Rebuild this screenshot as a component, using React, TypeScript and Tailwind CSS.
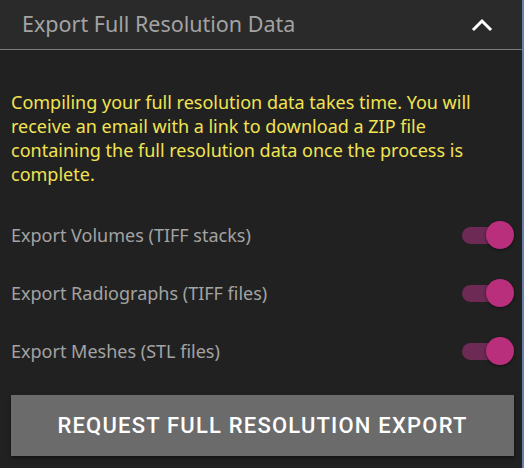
import React from 'react';

const options = [
    'Export Volumes (TIFF stacks)',
    'Export Radiographs (TIFF files)',
    'Export Meshes (STL files)',
];

function Toggle() {
    return (
        <div className="relative flex h-[28px] w-[52px] items-center">
            <div className="h-[17px] w-[38px] rounded-full bg-[#6c2a55]" />
            <div className="absolute right-0 top-0 h-[28px] w-[28px] rounded-full bg-[#b92f7b] shadow-[0_1px_3px_rgba(0,0,0,0.5)]" />
        </div>
    );
}

export default function App() {
    return (
        <main className="flex h-[468px] w-[524px] bg-[#212121] font-['Noto_Sans',sans-serif]">
            <div className="flex flex-1 flex-col">
                <header className="flex h-[50px] items-center justify-between border-b border-[#7a7a7a] bg-[#2a2a2a] pl-[22px] pr-[29px]">
                    <h1 className="text-[21.5px] text-[#a3a3a3]">Export Full Resolution Data</h1>
                    <svg width="22" height="14" viewBox="0 0 22 14" fill="none" stroke="white" strokeWidth="3" strokeLinecap="square">
                        <path d="M3 11 L11 3 L19 11" />
                    </svg>
                </header>
                <section className="flex flex-col pl-[11px] pr-[8px] pt-[40px]">
                    <p className="pr-[10px] text-[18px] leading-[24px] text-[#f2e452]">
                        Compiling your full resolution data takes time. You will receive an email with a link to download a ZIP file containing the full resolution data once the process is complete.
                    </p>
                    <div className="mt-[20px] flex flex-col">
                        {options.map((label) => (
                            <div key={label} className="flex h-[58px] items-center justify-between">
                                <span className="text-[18px] text-[#a3a3a3]">{label}</span>
                                <Toggle />
                            </div>
                        ))}
                    </div>
                    <button className="mt-[15px] flex h-[61px] items-center justify-center bg-[#6b6b6b] font-['Roboto',sans-serif] text-[22px] font-medium tracking-[1.2px] text-white shadow-[0_2px_4px_rgba(0,0,0,0.5)]">
                        REQUEST FULL RESOLUTION EXPORT
                    </button>
                </section>
            </div>
            <div className="w-[2px] bg-[#6b7fa8]" />
        </main>
    );
}
